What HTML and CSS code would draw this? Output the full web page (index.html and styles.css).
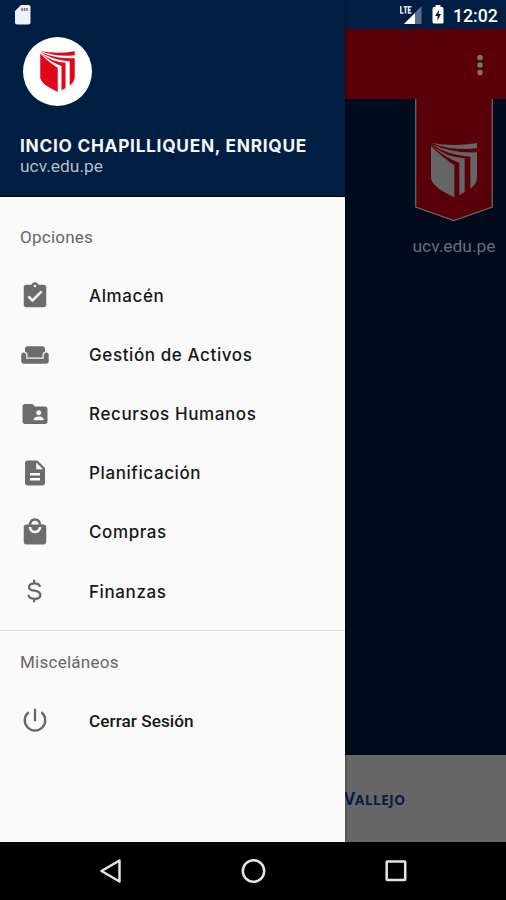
FILE: index.html
```html
<!DOCTYPE html>
<html lang="es">
<head>
<meta charset="utf-8">
<title>Opciones</title>
<link rel="stylesheet" href="styles.css">
</head>
<body>
<svg class="defs" width="0" height="0">
  <symbol id="shield" viewBox="0 0 138 164">
    <path d="M0 10V108Q5 133 70 164V67Q40 50 0 10Z"/>
    <path d="M0 6Q38 43 85 60V157L101 149V47Q45 44 0 6Z"/>
    <path d="M0 3Q45 36 118 42V138Q137 124 138 105V29Q60 32 0 3Z"/>
    <path d="M0 0Q65 14 138 1V17Q65 26 0 0Z"/>
  </symbol>
</svg>
<div class="phone">
  <section class="app">
    <header class="toolbar"><svg width="6" height="22" viewBox="0 0 6 22"><circle cx="3" cy="3.5" r="2.700"/><circle cx="3" cy="11" r="2.700"/><circle cx="3" cy="18.500" r="2.700"/></svg></header>
    <main class="content">
      <div class="brand">
        <svg class="ribbon" width="78" height="124" viewBox="0 0 78 124"><path d="M.7-2V108L39 121.500L77.300 108V-2" fill="#59000b" stroke="#656565" stroke-width="1.300"/><use href="#shield" x="16" y="43.500" width="46" height="55" fill="#656565"/></svg>
        <span>ucv.edu.pe</span>
      </div>
    </main>
    <footer class="wordmark"><span>V<small>ALLEJO</small></span></footer>
  </section>
  <aside class="drawer">
    <header class="profile">
      <div class="avatar"><svg width="35" height="41"><use href="#shield" width="35" height="41" fill="#e10718"/></svg></div>
      <strong class="name">INCIO CHAPILLIQUEN, ENRIQUE</strong>
      <span class="mail">ucv.edu.pe</span>
    </header>
    <nav>
      <h2>Opciones</h2>
      <ul>
        <li><svg viewBox="0 0 24 24"><path d="M19 3h-4.180C14.400 1.840 13.300 1 12 1s-2.400.84-2.820 2H5c-1.100 0-2 .9-2 2v14c0 1.100.9 2 2 2h14c1.100 0 2-.9 2-2V5c0-1.100-.9-2-2-2zm-7 0c.55 0 1 .45 1 1s-.45 1-1 1-1-.45-1-1 .45-1 1-1zm-2 14l-4-4 1.410-1.410L10 14.170l6.590-6.590L18 9l-8 8z"/></svg><span>Almacén</span></li>
        <li><svg viewBox="0 0 24 24"><path d="M21 10c-1.100 0-2 .9-2 2v3H5v-3c0-1.100-.9-2-2-2s-2 .9-2 2v5c0 1.100.9 2 2 2h18c1.100 0 2-.9 2-2v-5c0-1.100-.9-2-2-2zm-3-5H6c-1.100 0-2 .9-2 2v2.150c1.160.41 2 1.510 2 2.820V14h12v-2.030c0-1.300.84-2.400 2-2.820V7c0-1.100-.9-2-2-2z"/></svg><span>Gestión de Activos</span></li>
        <li><svg viewBox="0 0 24 24"><path d="M20 6h-8l-2-2H4c-1.100 0-1.990.9-1.990 2L2 18c0 1.100.9 2 2 2h16c1.100 0 2-.9 2-2V8c0-1.100-.9-2-2-2zm-5 3c1.100 0 2 .9 2 2s-.9 2-2 2-2-.9-2-2 .9-2 2-2zm4 8h-8v-1c0-1.330 2.670-2 4-2s4 .67 4 2v1z"/></svg><span>Recursos Humanos</span></li>
        <li><svg viewBox="0 0 24 24"><path d="M14 2H6c-1.100 0-2 .9-2 2v16c0 1.100.9 2 2 2h12c1.100 0 2-.9 2-2V8l-6-6zm2 16H8v-2h8v2zm0-4H8v-2h8v2zm-3-5V3.500L18.500 9H13z"/></svg><span>Planificación</span></li>
        <li><svg viewBox="0 0 24 24"><path d="M19 6h-2c0-2.760-2.240-5-5-5S7 3.240 7 6H5c-1.100 0-2 .9-2 2v12c0 1.100.9 2 2 2h14c1.100 0 2-.9 2-2V8c0-1.100-.9-2-2-2zm-7-3c1.660 0 3 1.340 3 3H9c0-1.660 1.340-3 3-3zm0 10c-2.760 0-5-2.240-5-5h2c0 1.660 1.340 3 3 3s3-1.340 3-3h2c0 2.760-2.240 5-5 5z"/></svg><span>Compras</span></li>
        <li><svg class="line" viewBox="0 0 24 24"><path d="M11.300 3v3M11.300 18v3M16 8.700C15.700 6.900 14 5.900 11.500 5.900 8.900 5.900 7.200 7.100 7.200 8.900 7.200 13 16.300 10.500 16.300 15.100 16.300 17 14.500 18.200 11.700 18.200 8.700 18.200 6.900 17.100 6.700 15"/></svg><span>Finanzas</span></li>
      </ul>
      <h2 class="divided">Misceláneos</h2>
      <ul>
        <li class="logout"><svg class="line" viewBox="0 0 24 24"><path d="M12 3v10M6.900 5.800A8.200 8.200 0 1 0 17.100 5.800"/></svg><span>Cerrar Sesión</span></li>
      </ul>
    </nav>
  </aside>
  <div class="status">
    <svg class="sd" width="16" height="20" viewBox="0 0 16 20"><path d="M6 0h7.500Q15.500 0 15.500 2V17.500Q15.500 19.500 13.500 19.500H2Q0 19.500 0 17.500V6Z" fill="#eef2f8"/><path d="M7 3v3M9.500 3v3M12 3v3" stroke="#5c6c87" stroke-width="1.500"/></svg>
    <svg class="signal" width="22" height="19" viewBox="0 0 22 19"><path d="M21.500 0V18H4Z" fill="#596d8a"/><path d="M15 7V18H4Z" fill="#fff"/><path d="M.8 0V7H3.500M3.500.8H7.500M5.500.8V7.500M11.500.8H8.500V7H11.500M8.500 3.900H11" fill="none" stroke="#e4e9f1" stroke-width="1.500"/></svg>
    <svg class="battery" width="12" height="19" viewBox="0 0 12 19"><path d="M3.500 0h5v2H10q1.500 0 1.500 1.500V17q0 1.500-1.500 1.500H2Q.5 18.500.5 17V3.500Q.5 2 2 2h1.500Z" fill="#fff"/><path d="M7 5L3 11h2.500v4.500L9 9H6.700Z" fill="#001e42"/></svg>
    <time>12:02</time>
  </div>
  <div class="navbar">
    <svg width="24" height="26" viewBox="0 0 24 26"><path d="M2.500 13L20.500 2.500V23.500Z"/></svg>
    <svg width="26" height="26" viewBox="0 0 26 26"><circle cx="12.500" cy="13" r="10.700"/></svg>
    <svg width="24" height="24" viewBox="0 0 24 24"><rect x="2.700" y="2.500" width="18.500" height="18.500" rx=".5"/></svg>
  </div>
</div>
</body>
</html>
```
FILE: styles.css
```css
* { box-sizing: border-box; }
body { margin: 0; font-family: Roboto, sans-serif; background: #000; }
.defs { position: absolute; }
svg { display: block; }
.phone { width: 506px; height: 900px; display: grid; grid-template: 29px 813px 58px / 345px 161px; overflow: hidden; background: #000; }
.app { grid-area: 2 / 2; display: flex; flex-direction: column; }
.toolbar { height: 70px; background: #59000a; display: flex; justify-content: flex-end; padding: 25px 23px 0 0; fill: #82736a; }
.content { height: 656px; background: #000c1b; display: flex; justify-content: flex-end; }
.brand { width: 104px; display: flex; flex-direction: column; align-items: center; color: #696e76; font-size: 17.4px; line-height: 20px; }
.brand span { margin-top: 13px; }
.wordmark { height: 87px; background: #666; color: #0b1a43; font: bold 17px/20px "Open Sans", sans-serif; padding: 34px 0 0; }
.wordmark span { display: block; margin-left: -1px; }
.wordmark small { font-size: 13.5px; letter-spacing: .5px; }
.drawer { grid-area: 1 / 1 / 3 / 2; background: #fafafa; display: flex; flex-direction: column; box-shadow: 0 0 3px #0008; }
.profile { height: 197px; background: #001e42; border-bottom: 1px solid #000; padding: 37px 0 0 20px; display: flex; flex-direction: column; }
.avatar { width: 69px; height: 69px; border-radius: 50%; background: #fff; margin-left: 3px; padding: 14px 0 0 17px; }
.name { margin-top: 29px; font: 650 17.3px/21px Inter, sans-serif; letter-spacing: .72px; color: #f4f6fa; white-space: nowrap; }
.mail { font-size: 17.4px; line-height: 20px; color: #b5bdca; }
h2 { margin: 0; padding: 29px 20px 0; height: 69px; font-size: 17px; line-height: 23px; font-weight: 400; color: #666; letter-spacing: .25px; }
h2.divided { margin-top: -1px; border-top: 1px solid #dedede; padding-top: 20px; height: 61px; }
ul { list-style: none; margin: 0; padding: 0; }
ul:first-of-type { padding-bottom: 10px; }
li { height: 59.1px; display: flex; align-items: center; padding-left: 20px; font: 500 17px/24px Inter, sans-serif; letter-spacing: .6px; color: #161616; white-space: nowrap; }
li span { padding-top: 1px; }
li svg { width: 30px; height: 30px; fill: #6c6c6c; margin-right: 39px; flex: none; }
li .line { fill: none; stroke: #666; stroke-width: 1.8; }
.logout { font: 500 17.2px/24px Roboto, sans-serif; letter-spacing: .05px; }
.status { grid-area: 1 / 1 / 2 / 3; display: flex; align-items: flex-start; padding: 5px 9px 0 15px; color: #fff; z-index: 1; }
.sd { margin-right: auto; }
.phone::before { content: ""; grid-area: 1 / 2; background: #001e42; }
.signal { margin: 1px 10px 0 0; }
.battery { margin-right: 9px; }
.status time { font-size: 17.7px; line-height: 22px; font-weight: 500; width: 44px; white-space: nowrap; }
.navbar { grid-area: 3 / 1 / 4 / 3; display: flex; justify-content: space-between; align-items: center; padding: 0 98px 0 99px; fill: none; stroke: #e4e4e4; stroke-width: 2.5; stroke-linejoin: round; }
```
